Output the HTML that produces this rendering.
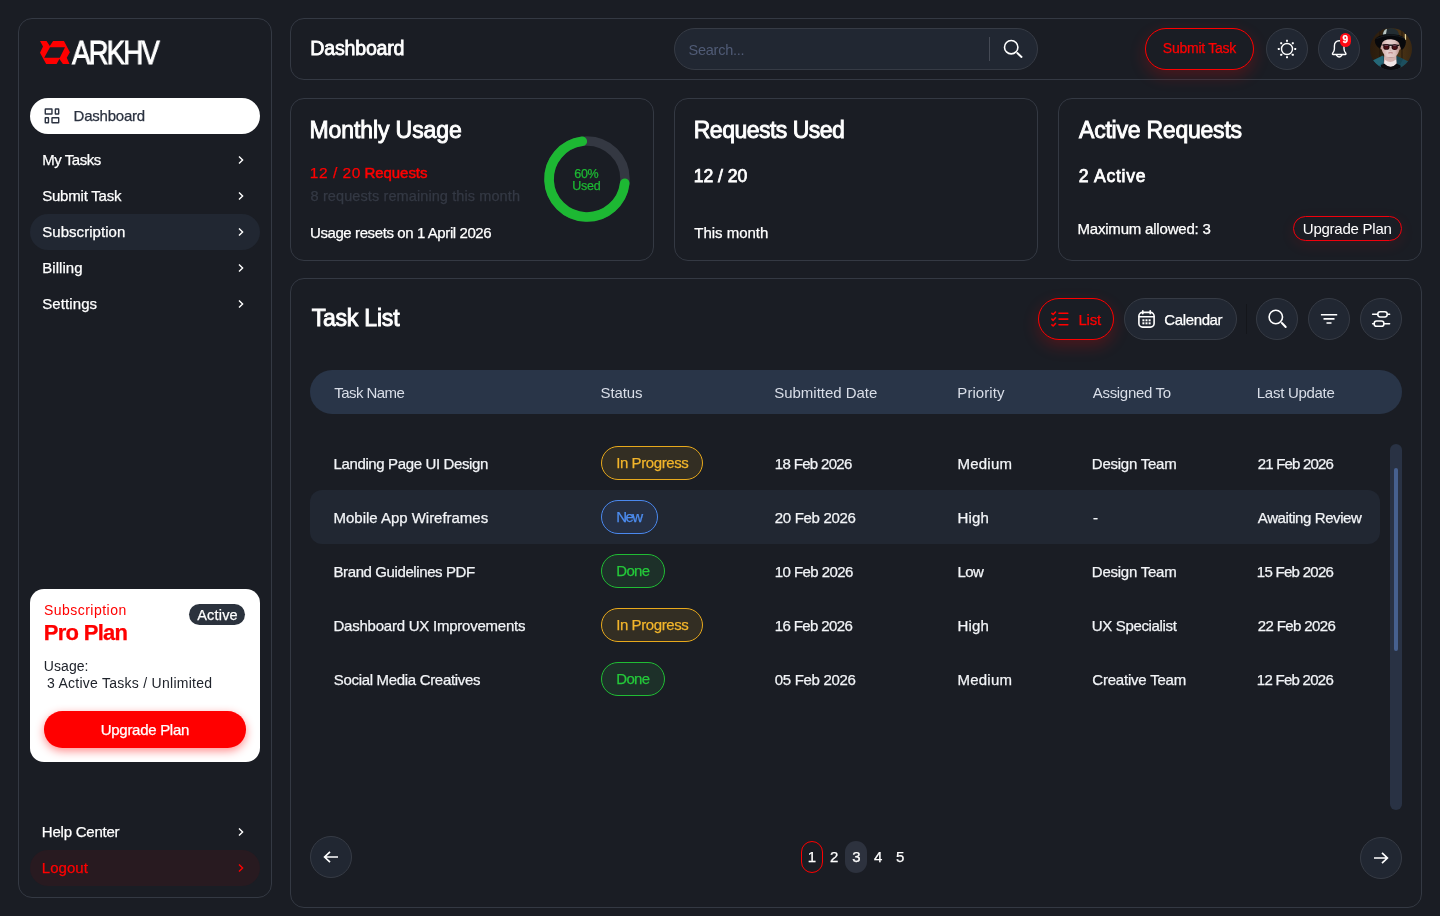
<!DOCTYPE html>
<html lang="en">
<head>
<meta charset="utf-8">
<title>ARKHV Dashboard</title>
<style>
*{box-sizing:border-box;margin:0;padding:0}
html,body{width:1440px;height:916px;overflow:hidden}
body{background:#1a1d24;color:#fff;font-family:"Liberation Sans",sans-serif;font-size:15px;position:relative}
.abs{position:absolute}
.panel{position:absolute;border:1px solid #343943;border-radius:14px;background:#1a1d24}
.t{position:absolute;white-space:nowrap;line-height:20px;height:20px;-webkit-text-stroke:.25px}
#txt{position:absolute;left:0;top:0;width:1440px;height:916px;will-change:transform}
svg{display:block;overflow:visible;position:absolute}
.nav{position:absolute;left:30px;width:230px;height:36px;border-radius:18px}
.chev{left:238px;width:6px;height:10px;fill:none;stroke:#fff;stroke-width:1.4}
.circ{position:absolute;width:42px;height:42px;border-radius:21px;background:#212732;border:1px solid #363b45}
.badge{position:absolute;left:601px;height:34px;border-radius:17px;border:1.500px solid}
.pg{position:absolute;top:841px;width:22px;height:32px;border-radius:11px}
</style>
</head>
<body>

<!-- ============ SIDEBAR ============ -->
<div class="panel" id="sidebar" style="left:18px;top:18px;width:254px;height:880px"></div>

<svg id="logo" style="left:40px;top:41px" width="30" height="23" viewBox="0 0 30 23">
  <path fill-rule="evenodd" fill="#ff0000" d="M0 0 L6.500 0 L9.800 4.950 L13.100 0 L23.950 0 L29.900 11.250 L26.750 16.850 L29.550 23 L22.900 23 L19.400 18.050 L16.600 23 L6.150 23 L0 11.750 L3 5.500 Z M10 6.200 L25 6.200 L19.750 16.650 L4.200 16.650 Z"/>
</svg>
<div class="t" id="logotext" style="left:71.500px;top:36px;font-size:33px;line-height:34px;height:34px;letter-spacing:-2.300px;color:#fff;-webkit-text-stroke:0.900px #fff;transform-origin:0 0;transform:scaleX(.84);will-change:transform">ARKHV</div>

<div class="nav" style="top:98px;background:#fff"></div>
<svg id="dashico" style="left:44px;top:108px" width="16" height="16" viewBox="0 0 16 16" fill="none" stroke="#2b3240" stroke-width="1.400"><rect x="1.270" y="0.970" width="6.700" height="5" rx="0.300"/><rect x="11.360" y="0.970" width="3.330" height="5" rx="0.300"/><rect x="1.270" y="9.680" width="3.200" height="5" rx="0.300"/><rect x="8" y="9.680" width="6.700" height="5" rx="0.300"/></svg>
<svg class="chev" style="top:155px" viewBox="0 0 6 10"><path d="M1 1.5 L4.6 5 L1 8.5"/></svg>
<svg class="chev" style="top:191px" viewBox="0 0 6 10"><path d="M1 1.5 L4.6 5 L1 8.5"/></svg>
<div class="nav" style="top:214px;background:#212732"></div>
<svg class="chev" style="top:227px" viewBox="0 0 6 10"><path d="M1 1.5 L4.6 5 L1 8.5"/></svg>
<svg class="chev" style="top:263px" viewBox="0 0 6 10"><path d="M1 1.5 L4.6 5 L1 8.5"/></svg>
<svg class="chev" style="top:299px" viewBox="0 0 6 10"><path d="M1 1.5 L4.6 5 L1 8.5"/></svg>

<!-- subscription card -->
<div class="abs" id="subcard" style="left:30px;top:589px;width:230px;height:173px;background:#fff;border-radius:14px"></div>
<div class="abs" style="left:189px;top:604px;width:56px;height:21px;border-radius:10.5px;background:#2b323d"></div>
<div class="abs" style="left:44px;top:711px;width:202px;height:36.5px;border-radius:18.25px;background:#ff0000;box-shadow:0 3px 10px rgba(255,0,0,.45)"></div>

<svg class="chev" style="top:827px" viewBox="0 0 6 10"><path d="M1 1.5 L4.6 5 L1 8.5"/></svg>
<div class="nav" style="top:850px;background:#281a20"></div>
<svg class="chev" style="top:863px;stroke:#ff0000" viewBox="0 0 6 10"><path d="M1 1.5 L4.6 5 L1 8.5"/></svg>

<!-- ============ HEADER ============ -->
<div class="panel" id="header" style="left:290px;top:18px;width:1132px;height:62px"></div>
<div class="abs" id="search" style="left:674px;top:28px;width:364px;height:42px;border-radius:21px;background:#212732;border:1px solid #363b45"></div>
<div class="abs" style="left:989px;top:37px;width:1px;height:24px;background:#454a55"></div>
<svg style="left:1003px;top:39px" width="20" height="20" viewBox="0 0 20 20" fill="none" stroke="#fff" stroke-width="1.6" stroke-linecap="round"><circle cx="8.200" cy="8.200" r="6.700"/><path d="M14.300 14.100 L18.500 17.900" stroke-width="2"/></svg>

<div class="abs" id="submit" style="left:1145px;top:28px;width:108.5px;height:42px;border-radius:21px;border:1.5px solid #ff0000;background:#1a1d24;box-shadow:0 6px 16px rgba(255,0,0,.22)"></div>

<div class="circ" style="left:1266px;top:28px"></div>
<svg id="sun" style="left:1277px;top:39px" width="20" height="20" viewBox="0 0 20 20" fill="none" stroke="#fff" stroke-width="1.400"><circle cx="10" cy="10" r="5.500"/><g stroke="none" fill="#fff"><rect x="9.00" y="0.80" width="2" height="2" rx=".4"/><rect x="14.80" y="3.20" width="2" height="2" rx=".4"/><rect x="17.20" y="9.00" width="2" height="2" rx=".4"/><rect x="14.80" y="14.80" width="2" height="2" rx=".4"/><rect x="9.00" y="17.20" width="2" height="2" rx=".4"/><rect x="3.20" y="14.80" width="2" height="2" rx=".4"/><rect x="0.80" y="9.00" width="2" height="2" rx=".4"/><rect x="3.20" y="3.20" width="2" height="2" rx=".4"/></g></svg>
<div class="circ" style="left:1318px;top:28px"></div>
<svg id="bell" style="left:1330px;top:38px" width="18" height="22" viewBox="0 0 18 22" fill="none" stroke="#fff" stroke-width="1.400" stroke-linecap="round" stroke-linejoin="round"><path d="M9.200 2.800C6.200 2.800 4.400 5 4.400 8V10.800C4.400 12.800 3.600 14.200 2.600 15.300 2.200 15.900 2.500 16.500 3.200 16.500H15.200C15.900 16.500 16.200 15.900 15.800 15.300 14.800 14.200 14 12.800 14 10.800V8C14 5 12.200 2.800 9.200 2.800Z"/><path d="M6.600 17.300Q9.200 20.800 11.800 17.300"/></svg>
<div class="abs" style="left:1339.900px;top:33.100px;width:11.200px;height:14px;border-radius:5.600px;background:#ff0a14"></div>
<!-- avatar -->
<svg id="avatar" style="left:1370px;top:27.500px" width="42" height="42" viewBox="0 0 42 42">
  <defs><clipPath id="avc"><circle cx="21" cy="21" r="21"/></clipPath>
  <linearGradient id="avbg" x1="0" x2="1" y1="0" y2="0"><stop offset="0" stop-color="#2a1b0d"/><stop offset=".35" stop-color="#33230f"/><stop offset=".7" stop-color="#4a3315"/><stop offset="1" stop-color="#3a2812"/></linearGradient>
  <linearGradient id="avface" x1="0" x2="1" y1="0" y2="0"><stop offset="0" stop-color="#cfa9a4"/><stop offset=".35" stop-color="#e6cfcd"/><stop offset=".75" stop-color="#dcc0bd"/><stop offset="1" stop-color="#b98f88"/></linearGradient>
  </defs>
  <g clip-path="url(#avc)">
    <rect width="42" height="42" fill="url(#avbg)"/>
    <rect x="9" y="0" width="1.500" height="30" fill="#22160a" opacity=".6"/><rect x="31" y="0" width="2" height="32" fill="#2a1c0d" opacity=".6"/>
    <rect x="34.800" y="6" width="1.300" height="6" fill="#e6d49a"/>
    <!-- jacket -->
    <path d="M0 35 L2.500 32.500 L12.800 27.600 L21 36 L26.800 28 L38.500 33.500 L42 36 L42 42 L0 42 Z" fill="#1c4f5f"/>
    <path d="M2.500 32.700 L12.800 27.800 L13.200 34.500 L9 38 Z" fill="#256878"/>
    <path d="M26.800 28.200 L33 31 L29.500 38 L26 36 Z" fill="#174553"/>
    <!-- neck / collar -->
    <path d="M14.300 25 L26.200 25 L26.600 36 Q21 41.500 13.800 36 Z" fill="#d3b2ae"/>
    <path d="M15 32 Q21 36 26 31.500 L26.500 36.800 Q21 41.500 14 36.800 Z" fill="#efe6e6"/>
    <path d="M11 37 Q13.500 36 14 35.500 Q21 42 26.600 35.500 Q28 36.500 30.500 37.500 L31 42 L11 42 Z" fill="#0b0c0f"/>
    <!-- face -->
    <path d="M11.600 12 Q21 8.500 29.300 12 L29.600 20 Q29 25.500 25.600 28.500 Q21 31.500 16.200 28.500 Q12.300 25.500 11.500 20 Z" fill="url(#avface)"/>
    <path d="M12 13 Q21 8.500 29.300 13 L29.300 11 L12 11 Z" fill="#c59c72"/>
    <ellipse cx="11.400" cy="19.500" rx="1" ry="2" fill="#caa09a"/><ellipse cx="29.700" cy="19.800" rx="1" ry="2" fill="#b98f88"/>
    <!-- hat crown -->
    <path d="M12.300 8 Q12.500 0.500 20 0 Q27.500 0.300 28.500 5 L30 9.500 Q21 6.500 12 10 Z" fill="#222c31"/>
    <path d="M13 6.500 Q13.300 2 17 0.800 L16 6 Z" fill="#b9c6c2"/>
    <!-- brim -->
    <path d="M4.800 12.300 Q5.500 8.200 13 7 Q21 5.600 29.500 7.300 Q35.800 9.200 35.900 14.200 Q35.500 19.500 31.600 22 L29.800 17.500 Q30 12.500 21 11.300 Q12.500 11.500 11.800 16 L10 20.800 Q4.800 17.500 4.800 12.300 Z" fill="#07080b"/>
    <path d="M6.500 10.500 Q12 7.600 21 7.200 Q29 7.400 34 10" stroke="#3a4347" stroke-width=".5" fill="none" opacity=".7"/>
    <!-- glasses -->
    <path d="M12.500 17 L29 17.300" stroke="#101116" stroke-width="1.300" fill="none"/>
    <ellipse cx="16.400" cy="18.900" rx="3.200" ry="2.900" fill="#22080b"/><ellipse cx="24.700" cy="19.100" rx="3.200" ry="2.900" fill="#22080b"/>
    <ellipse cx="16.400" cy="17.500" rx="2.200" ry=".800" fill="#6d4456"/><ellipse cx="24.700" cy="17.700" rx="2.200" ry=".800" fill="#6d4456"/>
    <ellipse cx="16.400" cy="19.600" rx="2.300" ry="1.500" fill="#4a0d12"/><ellipse cx="24.700" cy="19.800" rx="2.300" ry="1.500" fill="#4a0d12"/>
    <path d="M20.300 19 L19.800 22.500 L21.500 22.700" stroke="#c7a39e" stroke-width=".6" fill="none"/>
    <path d="M18.300 25 Q20.500 24.300 22.800 25" stroke="#b4787a" stroke-width="1" fill="none"/>
    <path d="M16.200 28.500 Q21 31.500 25.600 28.500 Q21 30.200 16.200 28.500 Z" fill="#b08a86"/>
  </g>
</svg>
<!-- ============ CARDS ============ -->
<div class="panel" style="left:290px;top:98px;width:364px;height:163px"></div>
<div class="panel" style="left:674px;top:98px;width:364px;height:163px"></div>
<div class="panel" style="left:1058px;top:98px;width:364px;height:163px"></div>
<svg id="donut" style="left:536.500px;top:129.300px" width="100" height="100" viewBox="-50 -50 100 100" fill="none">
  <circle r="38" stroke="#343842" stroke-width="9.400"/>
  <path d="M 37.76 4.30 A 38 38 0 1 1 -4.76 -37.70" stroke="#1db833" stroke-width="9.700" stroke-linecap="round"/>
</svg>
<div class="abs" id="upg2" style="left:1292.700px;top:215.700px;width:109.400px;height:25.500px;border-radius:12.750px;border:1.700px solid #f2000c;background:#1a1d24;box-shadow:0 4px 14px rgba(255,0,0,.10)"></div>
<!-- ============ TASK LIST ============ -->
<div class="panel" id="tasks" style="left:290px;top:278px;width:1132px;height:630px"></div>

<div class="abs" id="listbtn" style="left:1038px;top:298px;width:76px;height:42px;border-radius:21px;border:1.5px solid #ff0000;background:#1a1d24;box-shadow:0 6px 16px rgba(255,0,0,.22)"></div>
<svg id="listico" style="left:1051.400px;top:311.450px" width="18" height="16" viewBox="0 0 18 16" fill="none" stroke="#ff0000" stroke-width="1.600" stroke-linecap="round" stroke-linejoin="round"><path d="M8 2.300H16.800M8 8.100H16.800M8 13.800H16.800"/><path d="M0.900 2.300l1.300 1.200 2.300-2.500M0.900 8.100l1.300 1.200 2.300-2.500M0.900 13.800l1.300 1.200 2.300-2.500"/></svg>
<div class="abs" id="calbtn" style="left:1124px;top:298px;width:113px;height:42px;border-radius:21px;border:1px solid #363b45;background:#212732"></div>
<svg id="calico" style="left:1137.500px;top:310.200px" width="17" height="18" viewBox="0 0 17 18" fill="none" stroke="#fff" stroke-width="1.600" stroke-linecap="round"><rect x="0.900" y="2.400" width="15.200" height="14.700" rx="3.600"/><path d="M4.800 0.800v3M12.200 0.800v3M1.200 6.700h14.600"/><g stroke="none" fill="#fff"><rect x="4.400" y="9.300" width="2" height="2"/><rect x="7.500" y="9.300" width="2" height="2"/><rect x="10.600" y="9.300" width="2" height="2"/><rect x="4.400" y="12.300" width="2" height="2"/><rect x="7.500" y="12.300" width="2" height="2"/><rect x="10.600" y="12.300" width="2" height="2"/></g></svg>
<div class="abs" style="left:1246px;top:304px;width:1px;height:30px;background:#14161b"></div>
<div class="circ" style="left:1256px;top:298px"></div>
<svg style="left:1267.500px;top:309.200px" width="20" height="20" viewBox="0 0 20 20" fill="none" stroke="#fff" stroke-width="1.600" stroke-linecap="round"><circle cx="7.800" cy="8" r="6.700"/><path d="M13.900 14 L17.700 18" stroke-width="2"/></svg>
<div class="circ" style="left:1308px;top:298px"></div>
<svg style="left:1320px;top:313px" width="18" height="12" viewBox="0 0 18 12" fill="none" stroke="#fff" stroke-width="1.600"><path d="M0.900 1.700H17.200M3.500 5.900H14.500M6.500 10H11.500"/></svg>
<div class="circ" style="left:1360px;top:298px"></div>
<svg style="left:1371px;top:310px" width="20" height="18" viewBox="0 0 20 18" fill="none" stroke="#fff" stroke-width="1.500" stroke-linecap="round"><path d="M1.600 4.200H6.800M16.200 4.200H18.600M1.600 13.700H3.200M12.900 13.700H18.600"/><rect x="6.800" y="1.700" width="9.400" height="5.200" rx="2.400"/><rect x="3.200" y="11.100" width="9.700" height="5.200" rx="2.400"/></svg>

<div class="abs" id="thead" style="left:310px;top:370px;width:1092px;height:44px;border-radius:22px;background:#293548"></div>
<div class="abs" id="row2" style="left:310px;top:490px;width:1070px;height:54px;border-radius:12px;background:#212732"></div>

<div class="badge" style="top:446px;width:102px;border-color:#e8a91c;background:#332e23"></div>
<div class="badge" style="top:500px;width:56.800px;border-color:#4a88ee;background:#263044"></div>
<div class="badge" style="top:554px;width:64px;border-color:#20bc34;background:#1d3029"></div>
<div class="badge" style="top:608px;width:102px;border-color:#e8a91c;background:#332e23"></div>
<div class="badge" style="top:662px;width:64px;border-color:#20bc34;background:#1d3029"></div>

<div class="abs" id="track" style="left:1390px;top:444px;width:12px;height:366px;border-radius:6px;background:#293244"></div>
<div class="abs" id="thumb" style="left:1394px;top:468px;width:4px;height:183px;border-radius:2px;background:#46608f"></div>

<div class="circ" style="left:310px;top:836px"></div>
<svg style="left:323px;top:851px" width="16" height="12" viewBox="0 0 16 12" fill="none" stroke="#fff" stroke-width="1.700" stroke-linejoin="miter"><path d="M15 6H1.700M7 0.800L1.600 6 7 11.200"/></svg>
<div class="circ" style="left:1360px;top:837px"></div>
<svg style="left:1373px;top:852px" width="16" height="12" viewBox="0 0 16 12" fill="none" stroke="#fff" stroke-width="1.700" stroke-linejoin="miter"><path d="M1 6H14.300M9 0.800L14.400 6 9 11.200"/></svg>
<div class="pg" style="left:801px;border:1.500px solid #ff0000"></div>
<div class="pg" style="left:845px;background:#2d323e"></div>

<!--TEXTS-START-->
<div id="txt">
<div class="t" style="left:73.56px;top:105.70px;font-size:15px;color:#2b3240;letter-spacing:-0.225px">Dashboard</div>
<div class="t" style="left:42.20px;top:149.90px;font-size:15px;color:#ffffff;letter-spacing:-0.458px">My Tasks</div>
<div class="t" style="left:42.20px;top:185.90px;font-size:15px;color:#ffffff;letter-spacing:-0.214px">Submit Task</div>
<div class="t" style="left:42.20px;top:221.90px;font-size:15px;color:#ffffff;letter-spacing:0.052px">Subscription</div>
<div class="t" style="left:42.20px;top:257.90px;font-size:15px;color:#ffffff;letter-spacing:0.054px">Billing</div>
<div class="t" style="left:42.20px;top:293.90px;font-size:15px;color:#ffffff;letter-spacing:0.100px">Settings</div>
<div class="t" style="left:43.93px;top:600.25px;font-size:14px;color:#ff0000;-webkit-text-stroke:0;letter-spacing:0.475px">Subscription</div>
<div class="t" style="left:43.80px;top:622.98px;font-size:22px;color:#ff0000;font-weight:bold;letter-spacing:-0.715px">Pro Plan</div>
<div class="t" style="left:197.24px;top:605.08px;font-size:14.5px;color:#ffffff;letter-spacing:0.187px">Active</div>
<div class="t" style="left:43.80px;top:656.05px;font-size:14px;color:#20242c;-webkit-text-stroke:0;letter-spacing:0.066px">Usage:</div>
<div class="t" style="left:47.00px;top:672.95px;font-size:14px;color:#20242c;-webkit-text-stroke:0;letter-spacing:0.263px">3 Active Tasks / Unlimited</div>
<div class="t" style="left:100.78px;top:719.80px;font-size:15px;color:#ffffff;letter-spacing:-0.290px">Upgrade Plan</div>
<div class="t" style="left:41.81px;top:821.90px;font-size:15px;color:#ffffff;letter-spacing:-0.226px">Help Center</div>
<div class="t" style="left:41.76px;top:857.90px;font-size:15px;color:#ff0000;letter-spacing:0.061px">Logout</div>
<div class="t" style="left:1342.40px;top:30.43px;font-size:10px;color:#ffffff;font-weight:bold">9</div>
<div class="t" style="left:310.27px;top:38.01px;font-size:19.6px;color:#ffffff;letter-spacing:-0.203px;-webkit-text-stroke:0.8px #ffffff">Dashboard</div>
<div class="t" style="left:688.56px;top:39.98px;font-size:14.5px;color:#505b76;-webkit-text-stroke:0;letter-spacing:-0.258px">Search...</div>
<div class="t" style="left:1162.86px;top:38.35px;font-size:14px;color:#ff0000;letter-spacing:-0.254px">Submit Task</div>
<div class="t" style="left:309.43px;top:120.13px;font-size:23.0px;color:#ffffff;letter-spacing:-0.091px;-webkit-text-stroke:0.9px #ffffff">Monthly Usage</div>
<div class="t" style="left:309.84px;top:162.63px;font-size:15.5px;color:#ff0000;letter-spacing:0.514px">12 / 20</div>
<div class="t" style="left:364.53px;top:162.80px;font-size:15px;color:#ff0000;letter-spacing:-0.064px;-webkit-text-stroke:0.5px #ff0000">Requests</div>
<div class="t" style="left:310.60px;top:185.98px;font-size:14.5px;color:#343944;letter-spacing:0.102px">8 requests remaining this month</div>
<div class="t" style="left:309.98px;top:222.80px;font-size:15px;color:#ffffff;letter-spacing:-0.405px">Usage resets on 1 April 2026</div>
<div class="t" style="left:574.30px;top:163.67px;font-size:12.5px;color:#1db833;letter-spacing:-0.300px">60%</div>
<div class="t" style="left:572.18px;top:175.87px;font-size:12.5px;color:#1db833;letter-spacing:-0.205px">Used</div>
<div class="t" style="left:693.75px;top:120.03px;font-size:23.0px;color:#ffffff;letter-spacing:-0.513px;-webkit-text-stroke:0.9px #ffffff">Requests Used</div>
<div class="t" style="left:693.73px;top:165.90px;font-size:17.6px;color:#ffffff;letter-spacing:-0.020px;-webkit-text-stroke:0.75px #ffffff">12 / 20</div>
<div class="t" style="left:694.35px;top:222.80px;font-size:15px;color:#ffffff;letter-spacing:-0.023px">This month</div>
<div class="t" style="left:1079.06px;top:120.03px;font-size:23.0px;color:#ffffff;letter-spacing:-0.228px;-webkit-text-stroke:0.9px #ffffff">Active Requests</div>
<div class="t" style="left:1078.68px;top:165.90px;font-size:17.6px;color:#ffffff;letter-spacing:0.756px;-webkit-text-stroke:0.75px #ffffff">2 Active</div>
<div class="t" style="left:1077.51px;top:219.30px;font-size:15px;color:#ffffff;letter-spacing:-0.199px">Maximum allowed: 3</div>
<div class="t" style="left:1302.80px;top:219.10px;font-size:15px;color:#ffffff;-webkit-text-stroke:0;letter-spacing:-0.239px">Upgrade Plan</div>
<div class="t" style="left:311.65px;top:308.03px;font-size:23.0px;color:#ffffff;letter-spacing:-0.198px;-webkit-text-stroke:0.9px #ffffff">Task List</div>
<div class="t" style="left:1078.40px;top:309.90px;font-size:15px;color:#ff0000;letter-spacing:-0.148px">List</div>
<div class="t" style="left:1164.28px;top:309.80px;font-size:15px;color:#ffffff;letter-spacing:-0.365px">Calendar</div>
<div class="t" style="left:334.30px;top:382.60px;font-size:15px;color:#d9dee8;-webkit-text-stroke:0;letter-spacing:-0.560px">Task Name</div>
<div class="t" style="left:600.58px;top:382.60px;font-size:15px;color:#d9dee8;-webkit-text-stroke:0;letter-spacing:-0.121px">Status</div>
<div class="t" style="left:774.24px;top:382.60px;font-size:15px;color:#d9dee8;-webkit-text-stroke:0;letter-spacing:-0.022px">Submitted Date</div>
<div class="t" style="left:957.32px;top:382.60px;font-size:15px;color:#d9dee8;-webkit-text-stroke:0;letter-spacing:0.073px">Priority</div>
<div class="t" style="left:1092.80px;top:382.60px;font-size:15px;color:#d9dee8;-webkit-text-stroke:0;letter-spacing:-0.317px">Assigned To</div>
<div class="t" style="left:1256.80px;top:382.60px;font-size:15px;color:#d9dee8;-webkit-text-stroke:0;letter-spacing:-0.285px">Last Update</div>
<div class="t" style="left:333.52px;top:453.80px;font-size:15px;color:#f2f4f7;letter-spacing:-0.371px">Landing Page UI Design</div>
<div class="t" style="left:616.20px;top:453.30px;font-size:15px;color:#f2b52b;letter-spacing:-0.417px">In Progress</div>
<div class="t" style="left:774.80px;top:453.80px;font-size:15px;color:#f2f4f7;letter-spacing:-0.669px">18 Feb 2026</div>
<div class="t" style="left:957.52px;top:453.80px;font-size:15px;color:#f2f4f7;letter-spacing:0.226px">Medium</div>
<div class="t" style="left:1091.80px;top:453.80px;font-size:15px;color:#f2f4f7;letter-spacing:-0.234px">Design Team</div>
<div class="t" style="left:1257.80px;top:453.80px;font-size:15px;color:#f2f4f7;letter-spacing:-0.823px">21 Feb 2026</div>
<div class="t" style="left:333.52px;top:507.80px;font-size:15px;color:#f2f4f7;letter-spacing:-0.020px">Mobile App Wireframes</div>
<div class="t" style="left:616.20px;top:507.30px;font-size:15px;color:#4d8df0;letter-spacing:-1.587px">New</div>
<div class="t" style="left:774.80px;top:507.80px;font-size:15px;color:#f2f4f7;letter-spacing:-0.314px">20 Feb 2026</div>
<div class="t" style="left:957.52px;top:507.80px;font-size:15px;color:#f2f4f7;letter-spacing:0.159px">High</div>
<div class="t" style="left:1092.88px;top:507.80px;font-size:15px;color:#f2f4f7">-</div>
<div class="t" style="left:1257.85px;top:507.80px;font-size:15px;color:#f2f4f7;letter-spacing:-0.414px">Awaiting Review</div>
<div class="t" style="left:333.52px;top:561.80px;font-size:15px;color:#f2f4f7;letter-spacing:-0.400px">Brand Guidelines PDF</div>
<div class="t" style="left:616.20px;top:561.30px;font-size:15px;color:#24c93a;letter-spacing:-0.639px">Done</div>
<div class="t" style="left:774.80px;top:561.80px;font-size:15px;color:#f2f4f7;letter-spacing:-0.569px">10 Feb 2026</div>
<div class="t" style="left:957.52px;top:561.80px;font-size:15px;color:#f2f4f7;letter-spacing:-0.601px">Low</div>
<div class="t" style="left:1091.80px;top:561.80px;font-size:15px;color:#f2f4f7;letter-spacing:-0.234px">Design Team</div>
<div class="t" style="left:1256.80px;top:561.80px;font-size:15px;color:#f2f4f7;letter-spacing:-0.714px">15 Feb 2026</div>
<div class="t" style="left:333.52px;top:615.80px;font-size:15px;color:#f2f4f7;letter-spacing:-0.233px">Dashboard UX Improvements</div>
<div class="t" style="left:616.20px;top:615.30px;font-size:15px;color:#f2b52b;letter-spacing:-0.417px">In Progress</div>
<div class="t" style="left:774.80px;top:615.80px;font-size:15px;color:#f2f4f7;letter-spacing:-0.623px">16 Feb 2026</div>
<div class="t" style="left:957.52px;top:615.80px;font-size:15px;color:#f2f4f7;letter-spacing:0.159px">High</div>
<div class="t" style="left:1091.80px;top:615.80px;font-size:15px;color:#f2f4f7;letter-spacing:-0.344px">UX Specialist</div>
<div class="t" style="left:1257.80px;top:615.80px;font-size:15px;color:#f2f4f7;letter-spacing:-0.619px">22 Feb 2026</div>
<div class="t" style="left:333.79px;top:669.80px;font-size:15px;color:#f2f4f7;letter-spacing:-0.320px">Social Media Creatives</div>
<div class="t" style="left:616.20px;top:669.30px;font-size:15px;color:#24c93a;letter-spacing:-0.639px">Done</div>
<div class="t" style="left:774.80px;top:669.80px;font-size:15px;color:#f2f4f7;letter-spacing:-0.320px">05 Feb 2026</div>
<div class="t" style="left:957.52px;top:669.80px;font-size:15px;color:#f2f4f7;letter-spacing:0.226px">Medium</div>
<div class="t" style="left:1092.28px;top:669.80px;font-size:15px;color:#f2f4f7;letter-spacing:-0.207px">Creative Team</div>
<div class="t" style="left:1256.80px;top:669.80px;font-size:15px;color:#f2f4f7;letter-spacing:-0.723px">12 Feb 2026</div>
<div class="t" style="left:807.85px;top:847.40px;font-size:15px;color:#ffffff">1</div>
<div class="t" style="left:829.95px;top:847.40px;font-size:15px;color:#ffffff">2</div>
<div class="t" style="left:852.20px;top:847.40px;font-size:15px;color:#ffffff">3</div>
<div class="t" style="left:874.05px;top:847.40px;font-size:15px;color:#ffffff">4</div>
<div class="t" style="left:895.92px;top:847.40px;font-size:15px;color:#ffffff">5</div>
</div>
<!--TEXTS-END-->
</body>
</html>
